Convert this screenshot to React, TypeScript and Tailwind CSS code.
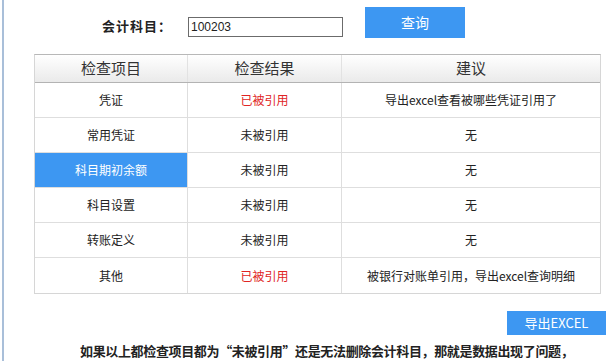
import React from 'react';

interface CheckRow {
  item: string;
  result: string;
  used: boolean;
  advice: string;
  active?: boolean;
}

const rows: CheckRow[] = [
  { item: '凭证', result: '已被引用', used: true, advice: '导出excel查看被哪些凭证引用了' },
  { item: '常用凭证', result: '未被引用', used: false, advice: '无' },
  { item: '科目期初余额', result: '未被引用', used: false, advice: '无', active: true },
  { item: '科目设置', result: '未被引用', used: false, advice: '无' },
  { item: '转账定义', result: '未被引用', used: false, advice: '无' },
  { item: '其他', result: '已被引用', used: true, advice: '被银行对账单引用，导出excel查询明细' },
];

const font = { fontFamily: '"Noto Sans CJK SC", "Liberation Sans", sans-serif' };

export default function App() {
  return (
    <div className="flex w-[612px] h-[361px] bg-white overflow-hidden text-[#222]" style={font}>
      <div className="w-[2px] shrink-0" />
      <div className="w-[2px] shrink-0 bg-[#a9bfd9]" />

      <div className="flex-1 flex flex-col">
        {/* 查询条件 */}
        <div className="flex items-start pl-[98px] pt-[7px]">
          <span className="mt-[9px] w-[70px] text-[13px] leading-[20px] font-bold tracking-[1px]">会计科目：</span>
          <input
            defaultValue="100203"
            className="ml-[16px] mt-[10px] w-[155px] h-[20px] border border-[#6b6b6b] px-[2px] text-[12px] leading-[18px] outline-none"
            style={{ fontFamily: '"Liberation Sans", sans-serif' }}
          />
          <button className="ml-[22px] w-[100px] h-[31px] bg-[#3d97f2] text-white text-[14px]">查询</button>
        </div>

        {/* 检查结果 */}
        <div className="ml-[30px] mt-[16px] w-[567px] border border-[#d6d6d6] border-t-[#b8b8b8]">
          <div className="grid grid-cols-[153px_154px_258px] h-[28px] bg-linear-to-b from-white to-[#eaeaea] border-b border-[#b3b3b3] text-[15px] text-[#333]">
            <div className="flex items-center justify-center border-r border-[#e2e2e2]">检查项目</div>
            <div className="flex items-center justify-center border-r border-[#e2e2e2]">检查结果</div>
            <div className="flex items-center justify-center">建议</div>
          </div>
          {rows.map((row, i) => (
            <div
              key={row.item}
              className={`grid grid-cols-[153px_154px_258px] h-[35px] text-[12px] ${i < rows.length - 1 ? 'border-b border-[#dedede]' : ''}`}
            >
              <div
                className={`flex items-center justify-center border-r border-[#dedede] ${row.active ? 'bg-[#3d97f2] text-white' : ''}`}
              >
                {row.item}
              </div>
              <div className={`flex items-center justify-center border-r border-[#dedede] ${row.used ? 'text-[#e02424]' : ''}`}>
                {row.result}
              </div>
              <div className="flex items-center justify-center">{row.advice}</div>
            </div>
          ))}
        </div>

        <div className="flex justify-end mt-[17px] pr-[6px]">
          <button className="w-[99px] h-[24px] bg-[#3d97f2] text-white text-[13px]">导出EXCEL</button>
        </div>

        <p className="mt-[6px] pl-[76px] text-[13px] leading-[20px] font-bold whitespace-nowrap tracking-[-0.35px]">
          如果以上都检查项目都为“未被引用”还是无法删除会计科目，那就是数据出现了问题，
        </p>
      </div>
    </div>
  );
}
